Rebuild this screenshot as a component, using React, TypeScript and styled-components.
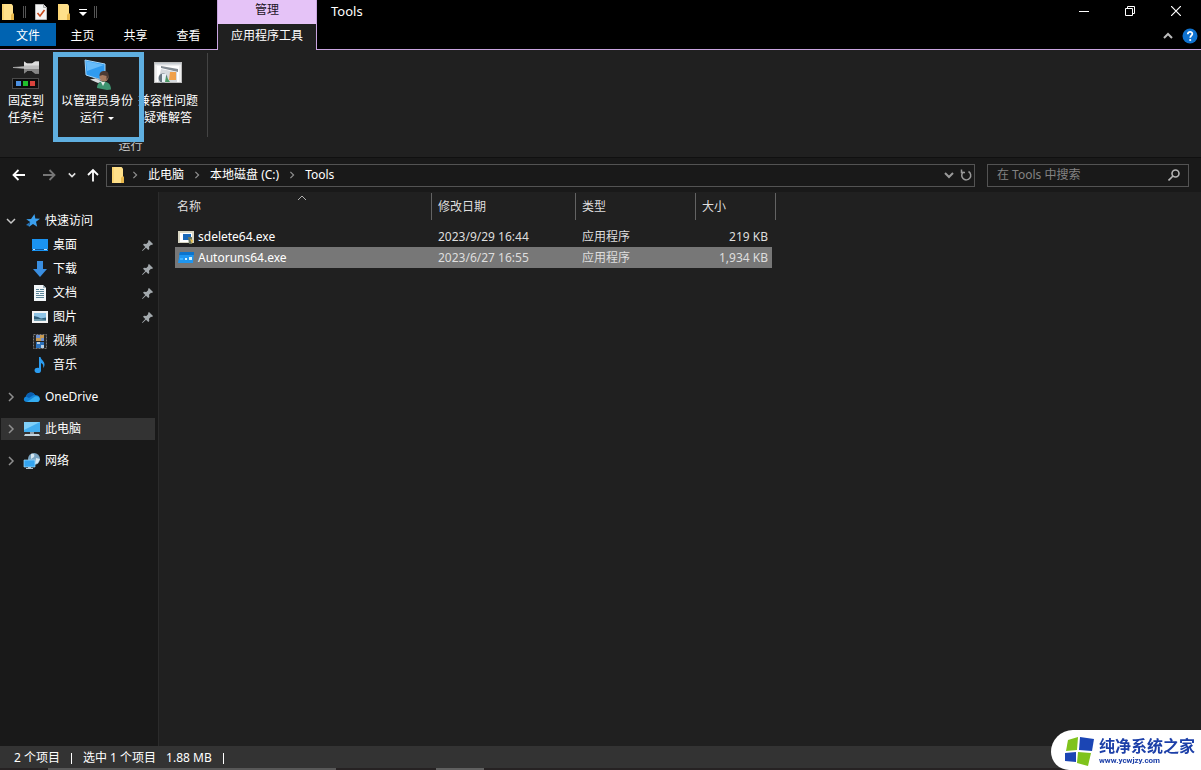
import React from 'react';
import styled, { createGlobalStyle, css } from 'styled-components';

const GlobalStyle = createGlobalStyle`
  *, *::before, *::after { box-sizing: border-box; }
  body {
    margin: 0;
    background: #202020;
    color: #fff;
    font: 12px/16px "Noto Sans", "Noto Sans CJK SC", sans-serif;
  }
  button, input { font: inherit; color: inherit; }
  button { border: 0; padding: 0; background: none; }
  a { color: inherit; text-decoration: none; }
  ul { margin: 0; padding: 0; list-style: none; }
  svg { display: block; flex: none; }
`;

const accent = '#c9a5e0';

const Window = styled.div`
  display: flex;
  flex-direction: column;
  min-height: 100vh;
`;

/* ---------- title bar and tabs ---------- */

const Header = styled.header`
  display: flex;
  background: #000;
`;

const HeaderSide = styled.div<{ $grow?: boolean }>`
  display: flex;
  flex-direction: column;
  flex: ${(p) => (p.$grow ? '1' : '0 0 217px')};
  border-bottom: 1px solid ${accent};
`;

const TitleRow = styled.div`
  display: flex;
  align-items: center;
  height: 22px;
`;

const QuickBar = styled.div`
  display: flex;
  align-items: center;
  gap: 7px;
  height: 23px;
`;

const Grip = styled.span`
  width: 3px;
  height: 12px;
  border: solid #555;
  border-width: 0 1px;
`;

const IconButton = styled.button`
  display: flex;
  align-items: center;
  justify-content: center;
`;

const TabRow = styled.nav`
  display: flex;
  height: 26px;
`;

const Tab = styled.button<{ $file?: boolean }>`
  width: ${(p) => (p.$file ? '56px' : '53px')};
  height: 23px;
  padding-top: 2px;
  background: ${(p) => (p.$file ? '#0063b1' : 'transparent')};
`;

const ContextGroup = styled.div`
  display: flex;
  flex-direction: column;
  flex: 0 0 100px;
  border: solid ${accent};
  border-width: 0 1px;
  background: #202020;
`;

const ContextTitle = styled.div`
  height: 24px;
  background: #e5c3f7;
  color: #1c1426;
  line-height: 20px;
  text-align: center;
`;

const ContextTab = styled.button`
  height: 24px;
  white-space: nowrap;
`;

const WindowTitle = styled.h1`
  flex: 1;
  margin: 0;
  padding-left: 14px;
  font-size: 13px;
  font-weight: 400;
`;

const CaptionButton = styled(IconButton)`
  width: 46px;
  height: 20px;
`;

const CaptionButtons = styled.div`
  display: flex;
  padding-right: 2px;
`;

const RibbonTools = styled.div`
  display: flex;
  align-items: center;
  justify-content: flex-end;
  gap: 9px;
  height: 27px;
  padding-right: 3px;
`;

/* ---------- ribbon ---------- */

const Ribbon = styled.section`
  display: flex;
  height: 108px;
  border-bottom: 1px solid #101010;
  background: #202020;
`;

const RibbonGroup = styled.div<{ $divided?: boolean }>`
  display: flex;
  flex-direction: column;
  width: ${(p) => (p.$divided ? '155px' : '53px')};
  padding-top: 3px;
`;

const GroupItems = styled.div<{ $divided?: boolean }>`
  display: flex;
  height: 84px;
  border-right: ${(p) => (p.$divided ? '1px solid #444' : '0')};
`;

const GroupLabel = styled.div`
  padding-top: 1px;
  text-align: center;
  color: #c8c8c8;
`;

const RibbonButton = styled.button<{ $width: number }>`
  position: relative;
  display: flex;
  flex-direction: column;
  align-items: center;
  width: ${(p) => p.$width}px;
  padding-top: 4px;
  line-height: 17px;
  white-space: nowrap;
`;

const RibbonIcon = styled.span`
  display: flex;
  align-items: center;
  justify-content: center;
  height: 35px;
`;

const Marked = styled.div`
  position: relative;
  z-index: 1;
  display: flex;
  &::after {
    content: '';
    position: absolute;
    inset: -1px -3px -5px 0;
    border: 5px solid #5fafe0;
    pointer-events: none;
  }
`;

const Caret = styled.span`
  display: inline-block;
  margin-left: 4px;
  border: 3px solid transparent;
  border-top-color: #fff;
  border-bottom: 0;
  vertical-align: middle;
`;

/* ---------- address bar ---------- */

const AddressRow = styled.div`
  display: flex;
  align-items: center;
  height: 34px;
  padding-right: 12px;
  background: #191919;
`;

const NavButtons = styled.div`
  display: grid;
  grid-template-columns: 30px 26px 18px 14px;
  align-items: center;
  justify-items: start;
  flex: 0 0 106px;
  padding-left: 12px;
`;

const AddressBox = styled.div`
  display: flex;
  align-items: center;
  flex: 1;
  height: 23px;
  margin-right: 12px;
  padding: 0 2px 0 3px;
  border: 1px solid #535353;
`;

const Crumbs = styled.nav`
  display: flex;
  align-items: center;
  flex: 1;
  gap: 9px;
  padding-left: 5px;
`;

const SearchBox = styled.label`
  display: flex;
  align-items: center;
  flex: 0 0 202px;
  min-width: 0;
  height: 23px;
  padding: 0 8px 0 9px;
  border: 1px solid #535353;
`;

const SearchInput = styled.input`
  flex: 1;
  min-width: 0;
  padding: 0;
  border: 0;
  outline: 0;
  background: none;
  &::placeholder { color: #838383; opacity: 1; }
`;

/* ---------- body ---------- */

const Body = styled.div`
  display: flex;
  flex: 1;
`;

const Sidebar = styled.nav`
  display: flex;
  flex-direction: column;
  gap: 10px;
  flex: 0 0 159px;
  padding: 18px 3px 0 1px;
  border-right: 1px solid #2b2b2b;
  background: #191919;
`;

const Section = styled.ul`
  display: flex;
  flex-direction: column;
  gap: 2px;
`;

const TreeRow = styled.li<{ $active?: boolean }>`
  display: flex;
  align-items: center;
  height: 22px;
  background: ${(p) => (p.$active ? '#333' : 'transparent')};
`;

const Toggle = styled(IconButton)`
  width: 19px;
  height: 22px;
  margin-right: 3px;
`;

const TreeLink = styled.a<{ $nested?: boolean }>`
  display: flex;
  align-items: center;
  flex: 1;
  gap: ${(p) => (p.$nested ? '5px' : '4px')};
  padding-left: ${(p) => (p.$nested ? '31px' : '0')};
`;

const PinMark = styled.span`
  padding-right: 2px;
`;

const Content = styled.main`
  flex: 1;
  padding-left: 16px;
  background: #202020;
`;

const FileTable = styled.table`
  width: 601px;
  table-layout: fixed;
  border-spacing: 0;
`;

const HeadCell = styled.th<{ $width: number }>`
  width: ${(p) => p.$width}px;
  padding: 1px 0 6px;
  font-weight: 400;
  text-align: left;
`;

const HeadButton = styled.button<{ $first?: boolean }>`
  position: relative;
  display: block;
  width: 100%;
  height: 27px;
  padding-left: ${(p) => (p.$first ? '2px' : '6px')};
  border-right: 1px solid #636363;
  color: #dedede;
  text-align: left;
`;

const SortMark = styled.span`
  position: absolute;
  top: 0;
  left: 50%;
  margin-left: -6px;
`;

const Cell = styled.td<{ $selected: boolean; $size?: boolean }>`
  height: 21px;
  padding: 0 0 0 6px;
  background: ${(p) => (p.$selected ? '#777' : 'transparent')};
  color: #dedede;
  ${(p) => p.$size && css`
    padding-right: 4px;
    border-right: 4px solid transparent;
    background-clip: padding-box;
    text-align: right;
  `}
`;

const NameCell = styled(Cell)`
  padding-left: 3px;
  color: #fff;
`;

const FileName = styled.span`
  display: flex;
  align-items: center;
  gap: 4px;
`;

/* ---------- status bar ---------- */

const StatusBar = styled.footer`
  display: flex;
  align-items: center;
  gap: 11px;
  height: 22px;
  padding: 2px 0 0 14px;
  background: #333;
`;

const StatusDivider = styled.span`
  width: 1px;
  height: 11px;
  background: #fff;
`;

const SelectionInfo = styled.span`
  display: flex;
  gap: 10px;
`;

const TaskStrip = styled.div`
  display: flex;
  height: 2px;
  background: #262223;
`;

const TaskPiece = styled.span<{ $width: number; $start: number; $color: string }>`
  width: ${(p) => p.$width}px;
  margin-left: ${(p) => p.$start}px;
  background: ${(p) => p.$color};
`;

const Badge = styled.aside`
  position: fixed;
  right: 0;
  bottom: 0;
  display: flex;
  align-items: center;
  gap: 4px;
  height: 40px;
  padding: 0 6px 0 13px;
  border-radius: 24px 0 0 20px;
  background: #fff;
  color: #1c3fa8;
  font-weight: 700;
`;

const BadgeText = styled.div`
  font-family: "Noto Sans CJK SC", sans-serif;
  font-size: 16px;
  line-height: 21px;
`;

const BadgeUrl = styled.div`
  font-family: Roboto, sans-serif;
  font-size: 8px;
  line-height: 10px;
`;

/* ---------- drawings ---------- */

const Folder = ({ size = 16 }: { size?: number }) => (
  <svg width={size} height={size} viewBox="0 0 16 16">
    <path d="M2 0h9.500l1.500 1.500V16H2z" fill="#ffe08a" />
    <path d="M2 0h2v16H2z" fill="#fbd574" />
    <path d="M12 9.500h2V16h-3v-5z" fill="#e9b84c" />
  </svg>
);

const CheckedPage = () => (
  <svg width="16" height="16" viewBox="0 0 16 16">
    <path d="M2.500.500h8l3 3v12h-11z" fill="#f4f4f4" stroke="#b9b9b9" />
    <path d="M10.500.500v3h3" fill="#ddd" stroke="#aaa" />
    <path d="M4.500 9l2.500 3 4.500-6" fill="none" stroke="#c74a1c" strokeWidth="1.600" />
  </svg>
);

type Direction = 'up' | 'down' | 'right';
const chevrons: Record<Direction, string> = {
  up: 'M1 7l4-4 4 4',
  down: 'M1 3l4 4 4-4',
  right: 'M3 1l4 4-4 4',
};
const Chevron = ({ to, size = 10, color = '#8f8f8f', weight = 1.5 }: { to: Direction; size?: number; color?: string; weight?: number }) => (
  <svg width={size} height={size} viewBox="0 0 10 10" fill="none" stroke={color} strokeWidth={weight}>
    <path d={chevrons[to]} />
  </svg>
);

const Arrow = ({ to, color }: { to: 'left' | 'right' | 'up'; color: string }) => (
  <svg width="14" height="14" viewBox="0 0 14 14" fill="none" stroke={color} strokeWidth="1.800">
    {to === 'left' && <path d="M13 7H1.500M6.500 2l-5 5 5 5" />}
    {to === 'right' && <path d="M1 7h11.500M7.500 2l5 5-5 5" />}
    {to === 'up' && <path d="M7 13.500V2M2 7l5-5 5 5" />}
  </svg>
);

const PinToTaskbar = () => (
  <svg width="28" height="28" viewBox="0 0 28 28">
    <path d="M1 6.500l12-1v2z" fill="#b9b9b9" stroke="#b9b9b9" strokeWidth=".600" />
    <path d="M12 .500l3 2h5l3-2h4v12h-4l-3-2.500h-5l-3 2.500z" fill="#bdbdbd" />
    <path d="M12 .500l3 2h5l3-2h4v4H12z" fill="#dedede" />
    <path d="M12 8h15v4.500h-4l-3-2.500h-5l-3 2.500z" fill="#858585" />
    <rect x=".500" y="17.500" width="26" height="10" fill="#0c0c0c" stroke="#4a4a4a" />
    <rect x="4" y="20" width="5" height="5" fill="#4b8fe0" />
    <rect x="11" y="20" width="5" height="5" fill="#1fbf2c" />
    <rect x="18" y="20" width="5" height="5" fill="#d8433c" />
  </svg>
);

const AdminRun = () => (
  <svg width="30" height="31" viewBox="0 0 30 31">
    <path d="M3 1l20 4v17L4 16z" fill="#2f9bf0" stroke="#a4d6fa" />
    <path d="M4 2l18 4L5 12z" fill="#67bcfa" />
    <path d="M13 19l4 1v2.500l-4-1z" fill="#9ba3a8" />
    <path d="M8 20.500l5-1 8 3-5 1.500z" fill="#d8dde0" />
    <path d="M15 29c0-5 3-6.500 6.500-6.500s7.500 2 7.500 8l-4 .500z" fill="#3d9470" />
    <path d="M19 23l2 4 2-4z" fill="#e6ede9" />
    <circle cx="22" cy="18" r="4.500" fill="#a97c61" />
    <path d="M17.500 17c0-4 2-5 5-5s4.500 2 4 6l-2 3v-4l-4-1z" fill="#4d3b34" />
  </svg>
);

const Troubleshoot = () => (
  <svg width="28" height="25" viewBox="0 0 28 25">
    <rect x=".500" y=".500" width="27" height="20" fill="#efefef" stroke="#bdbdbd" />
    <path d="M1 1h26v1.500H1z" fill="#c7cdd2" />
    <path d="M3 4h22v16H3z" fill="#fff" />
    <path d="M7 4l17 3v3L7 6z" fill="#858d94" />
    <path d="M7 7l16 3v10H4z" fill="#d6dade" />
    <path d="M16 10h6v8h-7z" fill="#f0a14b" />
    <circle cx="9" cy="16" r="4.500" fill="#66757f" />
    <path d="M8 12h4v8H8z" fill="#e8f1f5" />
    <path d="M12 14l4 6h-5z" fill="#4d9a69" />
  </svg>
);

const Pin = () => (
  <svg width="11" height="11" viewBox="0 0 11 11">
    <path d="M7 0l4 4-1 1-1-.300-2 2 .300 2.300-1 1L4 7.700.500 11 0 10.500 3.300 7 1 4.700l1-1 2.300.300 2-2L6 1z" fill="#a3a9ad" />
  </svg>
);

const StarIcon = () => (
  <svg width="18" height="16" viewBox="0 0 18 16">
    <path d="M11.500 1l.800 4.500 4.700.200-4 3 1.200 5L10 11l-4.300 3 1.500-5-4-2.700 4.800-.200z" fill="#3ba0ee" />
    <path d="M3 12l4-3-1 4z" fill="#2878bd" />
  </svg>
);

const DesktopIcon = () => (
  <svg width="16" height="16" viewBox="0 0 16 16">
    <rect y="2" width="16" height="12" fill="#1a93f2" />
    <path d="M0 12.500h16" stroke="#0b58a0" />
    <path d="M1 12.500h2m9 0h3" stroke="#bfe0fa" />
  </svg>
);

const DownloadIcon = () => (
  <svg width="16" height="16" viewBox="0 0 16 16">
    <path d="M5 0h6v8h4l-7 8-7-8h4z" fill="#3a8ee0" />
  </svg>
);

const DocumentIcon = () => (
  <svg width="16" height="16" viewBox="0 0 16 16">
    <path d="M2 0h9l3 3v13H2z" fill="#f2f6f8" />
    <path d="M4 4.500h3m1 0h4M4 6.500h8M4 8.500h3m1 0h4M4 10.500h8M4 12.500h8" stroke="#5a8497" />
    <path d="M11 0v3h3z" fill="#9db4be" />
  </svg>
);

const PictureIcon = () => (
  <svg width="16" height="16" viewBox="0 0 16 16">
    <rect y="2" width="16" height="12" fill="#f3f3f3" />
    <rect x="2" y="4" width="12" height="8" fill="#8fc4e6" />
    <path d="M2 7l4 1 3 1.500 5-1V12H2z" fill="#2f5f7c" />
    <path d="M2 10l6 0 6 1v1H2z" fill="#719cae" />
  </svg>
);

const VideoIcon = () => (
  <svg width="16" height="16" viewBox="0 0 16 16">
    <rect x="1.500" y="1.500" width="13" height="14" fill="#252525" stroke="#777" strokeDasharray="2 1" />
    <rect x="4" y="2" width="8" height="6" fill="#c79a52" />
    <path d="M4 2h4v3H4zM9 5h3v3H9z" fill="#6f92ce" />
    <rect x="4" y="9" width="8" height="6" fill="#2c72bd" />
    <path d="M5 9h3v2H5zM9 12h3v3H9z" fill="#b9cfe2" />
  </svg>
);

const MusicIcon = () => (
  <svg width="16" height="16" viewBox="0 0 16 16">
    <path d="M7 0h1.500c.500 3 4 4 4 7.500 0 1.500-.500 2.500-1.500 3.500.800-3-.500-4.500-2-5v7.500C9 17 3 17 2.500 13.500 2.500 11 5 10.500 7 11z" fill="#2b9cf0" />
  </svg>
);

const CloudIcon = () => (
  <svg width="18" height="16" viewBox="0 0 18 16">
    <path d="M4 13C0 13 0 8.500 3 7.500 4 3 10 2 12 6c4 0 5.500 3 4.500 5.500-.500 1-1.500 1.500-3 1.500z" fill="#1485d8" />
    <path d="M3 7.500C4 3 10 2 12 6c-3 0-4 2-6 3z" fill="#0a5fb0" />
    <path d="M4 13l8-5.500c4-1 6 2.500 4 4.500-.500.700-1.500 1-3 1z" fill="#35adf0" />
  </svg>
);

const ComputerIcon = () => (
  <svg width="18" height="16" viewBox="0 0 18 16">
    <rect x="1" y="1" width="16" height="10" fill="#42aef0" />
    <path d="M1 1h16L1 9z" fill="#7fd0fa" />
    <path d="M7 11h4v2H7z" fill="#91a2ad" />
    <path d="M2 13h14l1 2H1z" fill="#c5d5df" />
  </svg>
);

const NetworkIcon = () => (
  <svg width="18" height="16" viewBox="0 0 18 16">
    <circle cx="11" cy="6" r="6" fill="#7ba5c2" />
    <path d="M8 1c3-1 4 1 3 3L8 6zM13 5l4 1-2 4-3 1z" fill="#d6e7f0" />
    <path d="M1 7h11v7H1z" fill="#35a5f0" stroke="#9edcff" strokeWidth=".700" />
    <path d="M5 14h3v1h2v1H3v-1h2z" fill="#b5c6d0" />
  </svg>
);

const ProgramIcon = () => (
  <svg width="16" height="16" viewBox="0 0 16 16">
    <rect y="2" width="16" height="12" fill="#d9d6c3" />
    <path d="M2 4h12v9H2z" fill="#fff" />
    <path d="M5 5h8v6H5z" fill="#1968b8" />
    <path d="M10 8h4v7h-3z" fill="#6d7861" />
    <path d="M12 10l3 1-1 4z" fill="#e5bf4f" />
  </svg>
);

const AutorunsIcon = () => (
  <svg width="16" height="16" viewBox="0 0 16 16">
    <path d="M2 2h14l-1 11H0z" fill="#1e96f0" />
    <path d="M2 2h14v3H1z" fill="#0c74cc" />
    <path d="M7 8h2v2H7zM11 7h3v3h-3z" fill="#d2f2ff" />
    <path d="M2 8h3v2H2z" fill="#3eb2ff" />
  </svg>
);

const Logo = () => (
  <svg width="31" height="31" viewBox="0 0 31 31">
    <path d="M4 5l10-3-1 13-11 1z" fill="#7fc31c" />
    <path d="M16 2l14 2-2 12-13-1z" fill="#1b45b4" />
    <path d="M1 18l11-1v10l-11-1z" fill="#1b45b4" />
    <path d="M14 17l13 1-3 13-11-3z" fill="#7fc31c" />
  </svg>
);

/* ---------- data ---------- */

const quickItems = [
  { name: '桌面', icon: <DesktopIcon />, pinned: true },
  { name: '下载', icon: <DownloadIcon />, pinned: true },
  { name: '文档', icon: <DocumentIcon />, pinned: true },
  { name: '图片', icon: <PictureIcon />, pinned: true },
  { name: '视频', icon: <VideoIcon />, pinned: false },
  { name: '音乐', icon: <MusicIcon />, pinned: false },
];

const roots = [
  { name: 'OneDrive', icon: <CloudIcon />, active: false },
  { name: '此电脑', icon: <ComputerIcon />, active: true },
  { name: '网络', icon: <NetworkIcon />, active: false },
];

const columns = [
  { name: '名称', width: 257 },
  { name: '修改日期', width: 144 },
  { name: '类型', width: 120 },
  { name: '大小', width: 80 },
];

const files = [
  { name: 'sdelete64.exe', date: '2023/9/29 16:44', type: '应用程序', size: '219 KB', icon: <ProgramIcon />, selected: false },
  { name: 'Autoruns64.exe', date: '2023/6/27 16:55', type: '应用程序', size: '1,934 KB', icon: <AutorunsIcon />, selected: true },
];

export default function App() {
  return (
    <Window>
      <GlobalStyle />
      <Header>
        <HeaderSide>
          <QuickBar>
            <Folder />
            <Grip />
            <IconButton aria-label="属性"><CheckedPage /></IconButton>
            <IconButton aria-label="新建文件夹"><Folder /></IconButton>
            <IconButton aria-label="自定义快速访问工具栏">
              <svg width="8" height="8" viewBox="0 0 8 8">
                <path d="M0 1.500h8" stroke="#fff" />
                <path d="M0 4h8L4 8z" fill="#fff" />
              </svg>
            </IconButton>
            <Grip />
          </QuickBar>
          <TabRow>
            <Tab $file>文件</Tab>
            <Tab>主页</Tab>
            <Tab>共享</Tab>
            <Tab>查看</Tab>
          </TabRow>
        </HeaderSide>
        <ContextGroup>
          <ContextTitle>管理</ContextTitle>
          <ContextTab>应用程序工具</ContextTab>
        </ContextGroup>
        <HeaderSide $grow>
          <TitleRow>
            <WindowTitle>Tools</WindowTitle>
            <CaptionButtons>
              <CaptionButton aria-label="最小化">
                <svg width="10" height="10" viewBox="0 0 10 10"><path d="M0 5.500h10" stroke="#fff" /></svg>
              </CaptionButton>
              <CaptionButton aria-label="还原">
                <svg width="10" height="10" viewBox="0 0 10 10" fill="none" stroke="#fff">
                  <path d="M.500 2.500h7v7h-7zM2.500 2.500v-2h7v7h-2" />
                </svg>
              </CaptionButton>
              <CaptionButton aria-label="关闭">
                <svg width="10" height="10" viewBox="0 0 10 10" stroke="#fff" strokeWidth="1.200"><path d="M0 0l10 10M10 0L0 10" /></svg>
              </CaptionButton>
            </CaptionButtons>
          </TitleRow>
          <RibbonTools>
            <IconButton aria-label="折叠功能区"><Chevron to="up" color="#bcbcbc" weight={2} /></IconButton>
            <IconButton aria-label="帮助">
              <svg width="16" height="16" viewBox="0 0 16 16">
                <circle cx="8" cy="8" r="7.500" fill="#0f72cf" />
                <path d="M5.800 6.200C5.800 3 10.500 3.200 10.300 6 10.200 7.500 8.200 7.800 8.200 9.800" fill="none" stroke="#fff" strokeWidth="1.800" />
                <circle cx="8.200" cy="12" r="1.100" fill="#fff" />
              </svg>
            </IconButton>
          </RibbonTools>
        </HeaderSide>
      </Header>

      <Ribbon>
        <RibbonGroup>
          <GroupItems>
            <RibbonButton $width={52}>
              <RibbonIcon><PinToTaskbar /></RibbonIcon>
              <span>固定到</span>
              <span>任务栏</span>
            </RibbonButton>
          </GroupItems>
        </RibbonGroup>
        <RibbonGroup $divided>
          <GroupItems $divided>
            <Marked>
              <RibbonButton $width={88}>
                <RibbonIcon><AdminRun /></RibbonIcon>
                <span>以管理员身份</span>
                <span>运行<Caret /></span>
              </RibbonButton>
            </Marked>
            <RibbonButton $width={54}>
              <RibbonIcon><Troubleshoot /></RibbonIcon>
              <span>兼容性问题</span>
              <span>疑难解答</span>
            </RibbonButton>
          </GroupItems>
          <GroupLabel>运行</GroupLabel>
        </RibbonGroup>
      </Ribbon>

      <AddressRow>
        <NavButtons>
          <IconButton aria-label="后退"><Arrow to="left" color="#fff" /></IconButton>
          <IconButton aria-label="前进"><Arrow to="right" color="#777" /></IconButton>
          <IconButton aria-label="最近位置"><Chevron to="down" size={8} color="#e0e0e0" weight={2} /></IconButton>
          <IconButton aria-label="上移"><Arrow to="up" color="#fff" /></IconButton>
        </NavButtons>
        <AddressBox>
          <Folder />
          <Crumbs>
            <Chevron to="right" size={8} />
            <a href="#pc">此电脑</a>
            <Chevron to="right" size={8} />
            <a href="#c">本地磁盘 (C:)</a>
            <Chevron to="right" size={8} />
            <a href="#tools">Tools</a>
          </Crumbs>
          <IconButton aria-label="以前的位置"><Chevron to="down" color="#9a9a9a" weight={2} /></IconButton>
          <IconButton aria-label="刷新">
            <svg width="18" height="14" viewBox="2 0 18 14" fill="none" stroke="#9a9a9a" strokeWidth="1.500">
              <path d="M11.500 3.800a4.500 4.500 0 1 0 5-.300M9.500 1.500v3h3.500" />
            </svg>
          </IconButton>
        </AddressBox>
        <SearchBox>
          <SearchInput aria-label="搜索" placeholder="在 Tools 中搜索" />
          <svg width="12" height="12" viewBox="0 0 12 12" fill="none" stroke="#b5b5b5" strokeWidth="1.600">
            <circle cx="7.500" cy="4.500" r="3.500" />
            <path d="M5 7l-4.500 4.500" />
          </svg>
        </SearchBox>
      </AddressRow>

      <Body>
        <Sidebar>
          <Section>
            <TreeRow>
              <Toggle aria-label="折叠"><Chevron to="down" color="#c8c8c8" /></Toggle>
              <TreeLink href="#quick"><StarIcon />快速访问</TreeLink>
            </TreeRow>
            {quickItems.map((item) => (
              <TreeRow key={item.name}>
                <TreeLink href={`#${item.name}`} $nested>{item.icon}{item.name}</TreeLink>
                {item.pinned && <PinMark><Pin /></PinMark>}
              </TreeRow>
            ))}
          </Section>
          {roots.map((root) => (
            <Section key={root.name}>
              <TreeRow $active={root.active}>
                <Toggle aria-label="展开"><Chevron to="right" /></Toggle>
                <TreeLink href={`#${root.name}`}>{root.icon}{root.name}</TreeLink>
              </TreeRow>
            </Section>
          ))}
        </Sidebar>
        <Content>
          <FileTable>
            <thead>
              <tr>
                {columns.map((column, index) => (
                  <HeadCell key={column.name} $width={column.width}>
                    <HeadButton $first={index === 0}>
                      {column.name}
                      {index === 0 && <SortMark><Chevron to="up" weight={1} color="#b0b0b0" /></SortMark>}
                    </HeadButton>
                  </HeadCell>
                ))}
              </tr>
            </thead>
            <tbody>
              {files.map((file) => (
                <tr key={file.name}>
                  <NameCell $selected={file.selected}><FileName>{file.icon}{file.name}</FileName></NameCell>
                  <Cell $selected={file.selected}>{file.date}</Cell>
                  <Cell $selected={file.selected}>{file.type}</Cell>
                  <Cell $selected={file.selected} $size>{file.size}</Cell>
                </tr>
              ))}
            </tbody>
          </FileTable>
        </Content>
      </Body>

      <StatusBar>
        <span>2 个项目</span>
        <StatusDivider />
        <SelectionInfo><span>选中 1 个项目</span><span>1.88 MB</span></SelectionInfo>
        <StatusDivider />
      </StatusBar>
      <TaskStrip>
        <TaskPiece $start={48} $width={288} $color="#585858" />
        <TaskPiece $start={100} $width={48} $color="#606060" />
      </TaskStrip>
      <Badge>
        <Logo />
        <div>
          <BadgeText>纯净系统之家</BadgeText>
          <BadgeUrl>www.ycwjzy.com</BadgeUrl>
        </div>
      </Badge>
    </Window>
  );
}
